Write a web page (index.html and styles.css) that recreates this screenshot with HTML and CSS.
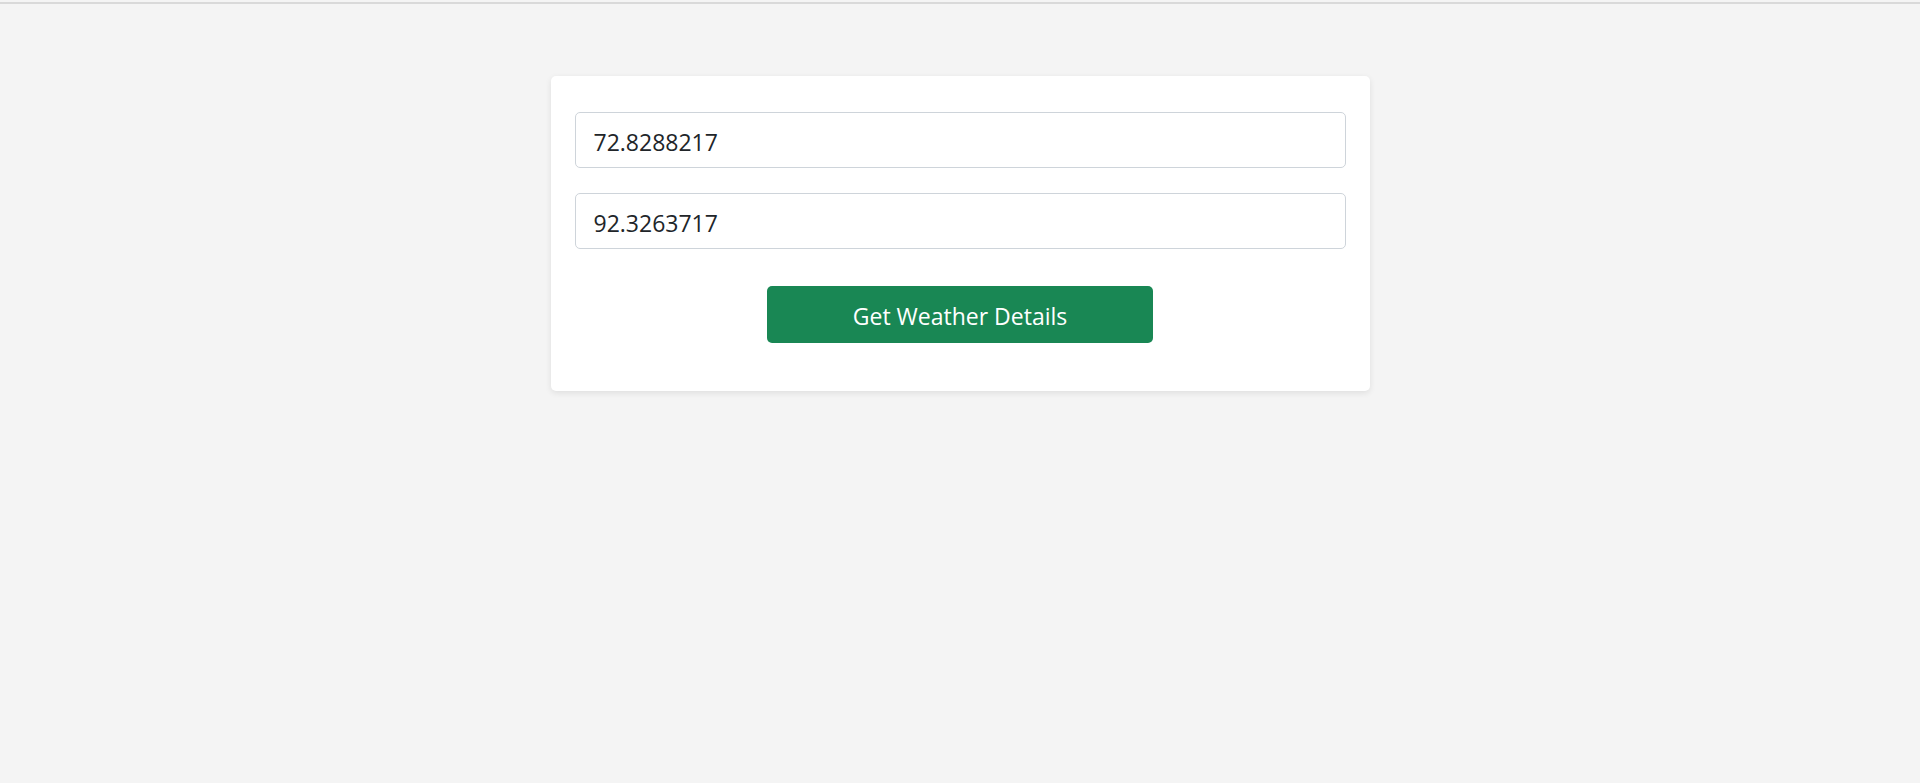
FILE: index.html
```html
<!DOCTYPE html>
<html lang="en">
<head>
<meta charset="utf-8">
<title>Weather</title>
<link rel="stylesheet" href="styles.css">
</head>
<body>
<div class="topline"></div>
<main class="page">
  <form class="card">
    <input class="field" type="text" value="72.8288217">
    <input class="field field-second" type="text" value="92.3263717">
    <div class="actions">
      <button class="btn" type="button">Get Weather Details</button>
    </div>
  </form>
</main>
</body>
</html>
```

FILE: styles.css
```css
html, body {
  margin: 0;
  padding: 0;
  background: #f4f4f4;
  height: 100%;
}

body {
  font-family: "Open Sans", "Noto Sans", sans-serif;
  color: #212529;
}

.topline {
  margin-top: 2px;
  height: 2px;
  background: #d9d9d9;
}

.page {
  padding-top: 72px;
  display: flex;
  justify-content: center;
}

.card {
  box-sizing: border-box;
  width: 819px;
  background: #ffffff;
  border-radius: 5px;
  box-shadow: 0 2px 6px rgba(0, 0, 0, 0.09);
  padding: 36px 24px 48px;
  display: flex;
  flex-direction: column;
  margin: 0;
}

.field {
  box-sizing: border-box;
  display: block;
  width: 100%;
  height: 56px;
  margin: 0;
  padding: 4px 18px 0;
  border: 1px solid #ced4da;
  border-radius: 5px;
  background: #fff;
  font-family: "Open Sans", "Noto Sans", sans-serif;
  font-size: 23px;
  color: #212529;
  outline: none;
}

.field-second {
  margin-top: 25px;
}

.actions {
  display: flex;
  justify-content: center;
  margin-top: 37px;
}

.btn {
  box-sizing: border-box;
  width: 386px;
  height: 57px;
  border: none;
  border-radius: 5px;
  background: #198754;
  color: #ffffff;
  font-family: "Open Sans", "Noto Sans", sans-serif;
  font-size: 23px;
  padding: 3px 0 0;
  cursor: pointer;
}
```
